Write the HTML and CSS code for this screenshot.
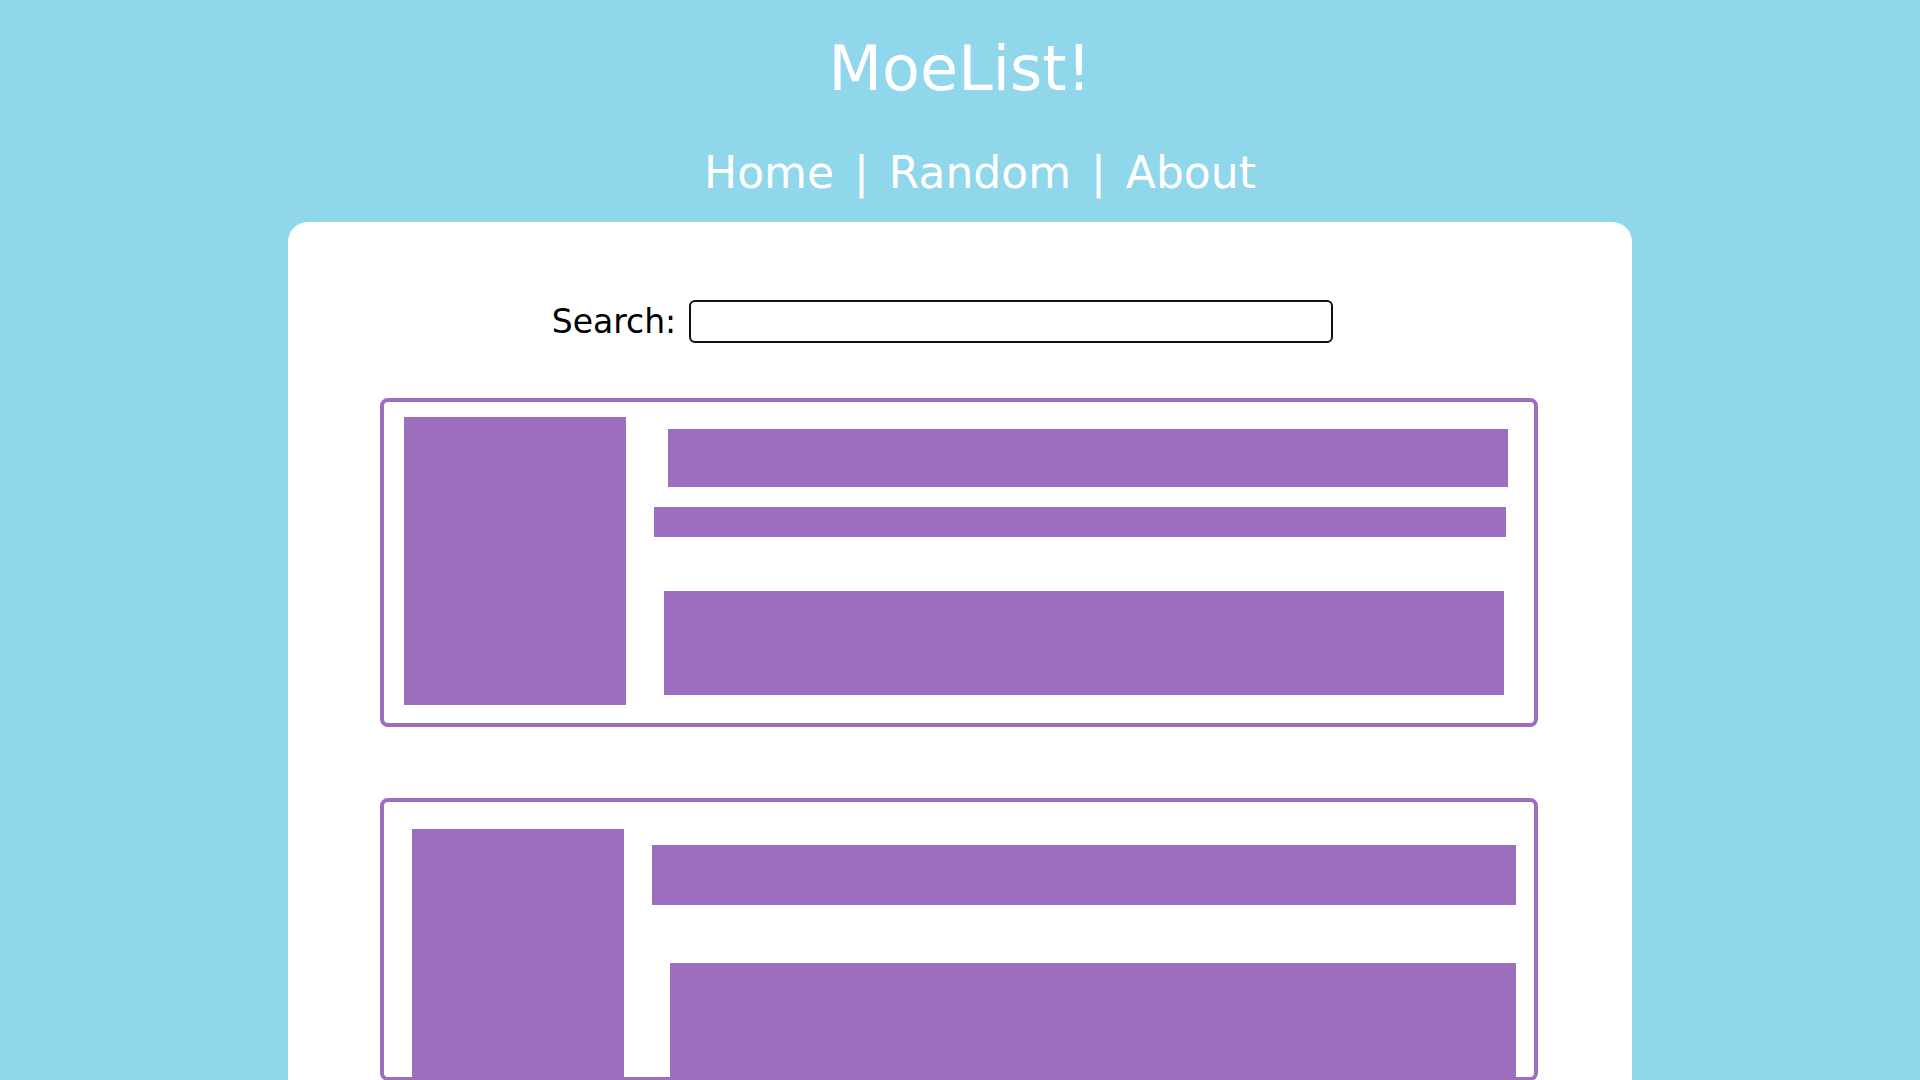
FILE: index.html
```html
<!DOCTYPE html>
<html lang="en">
<head>
<meta charset="utf-8">
<title>MoeList!</title>
<link rel="stylesheet" href="styles.css">
</head>
<body>
<header class="site-header">
  <h1 class="site-title">MoeList!</h1>
  <ul class="site-nav">
    <li><a href="#">Home</a> | <a href="#">Random</a> | <a href="#">About</a></li>
  </ul>
</header>
<main class="panel">
  <form class="search-row">
    <label class="search-label" for="q">Search:</label>
    <input class="search-input" id="q" type="text">
  </form>
  <section class="card card-one">
    <div class="thumb thumb-one"></div>
    <div class="info">
      <div class="bar bar-1a"></div>
      <div class="bar bar-1b"></div>
      <div class="bar bar-1c"></div>
    </div>
  </section>
  <section class="card card-two">
    <div class="thumb thumb-two"></div>
    <div class="info">
      <div class="bar bar-2a"></div>
      <div class="bar bar-2b"></div>
    </div>
  </section>
</main>
</body>
</html>
```
FILE: styles.css
```css
html, body {
  margin: 0;
  padding: 0;
}
body {
  background: #90d7ec;
  font-family: "DejaVu Sans", Verdana, sans-serif;
  overflow: hidden;
}
.site-header {
  padding-top: 32px;
  text-align: center;
  color: #ffffff;
}
.site-title {
  margin: 0;
  font-size: 62px;
  font-weight: normal;
  line-height: normal;
}
.site-nav {
  list-style: none;
  margin: 42px 0 0 0;
  padding: 0 0 0 40px;
  font-size: 44px;
  line-height: normal;
  word-spacing: 6px;
}
.site-nav a {
  color: #ffffff;
  text-decoration: none;
}
.panel {
  width: 70%;
  margin: 24px auto 0 auto;
  background: #ffffff;
  border-radius: 20px;
  padding: 78px 94px 200px 92px;
  box-sizing: border-box;
}
.search-row {
  display: flex;
  align-items: center;
  justify-content: center;
  padding-right: 35px;
  margin: 0 -94px 0 -92px;
}
.search-label {
  font-size: 33px;
  color: #000000;
  margin-right: 13px;
}
.search-input {
  width: 644px;
  height: 43px;
  box-sizing: border-box;
  border: 2px solid #111111;
  border-radius: 6px;
  background: #ffffff;
  padding: 0 8px;
  font-size: 20px;
}
.card {
  border: 4px solid #9d6dbe;
  border-radius: 8px;
  display: flex;
  align-items: flex-start;
  box-sizing: border-box;
}
.card-one {
  margin-top: 55px;
  padding: 15px 0 18px 20px;
}
.card-two {
  margin-top: 71px;
  height: 283px;
  overflow: hidden;
  padding: 27px 0 0 28px;
}
.thumb {
  background: #9d6dbe;
  flex: none;
}
.thumb-one {
  width: 222px;
  height: 288px;
}
.thumb-two {
  width: 212px;
  height: 320px;
}
.info {
  flex: 1;
  display: flex;
  flex-direction: column;
}
.bar {
  background: #9d6dbe;
}
.bar-1a {
  margin: 12px 26px 0 42px;
  height: 58px;
}
.bar-1b {
  margin: 20px 28px 0 28px;
  height: 30px;
}
.bar-1c {
  margin: 54px 30px 0 38px;
  height: 104px;
}
.bar-2a {
  margin: 16px 18px 0 28px;
  height: 60px;
}
.bar-2b {
  margin: 58px 18px 0 46px;
  height: 160px;
}
```
